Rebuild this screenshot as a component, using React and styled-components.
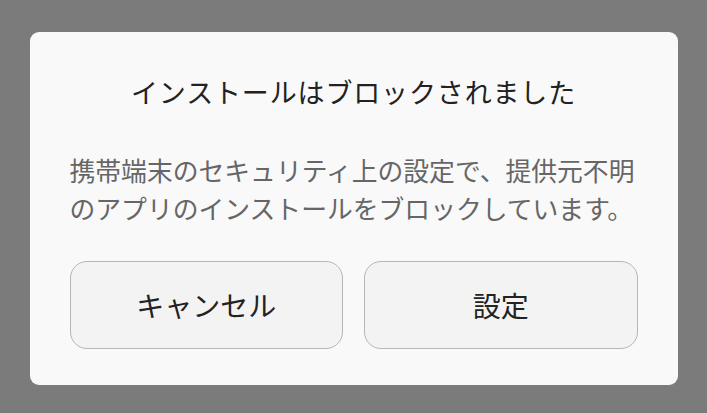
import styled, { createGlobalStyle } from "styled-components"

const GlobalStyle = createGlobalStyle`
    html, body {
        margin: 0;
        padding: 0;
        background: #7b7b7b;
        font-family: "Noto Sans CJK JP", "Noto Sans", sans-serif;
    }
`

const Screen = styled.div`
    width: 707px;
    height: 413px;
    display: flex;
    justify-content: center;
    padding-top: 32px;
    box-sizing: border-box;
`

const Dialog = styled.div`
    width: 648px;
    height: 353px;
    box-sizing: border-box;
    background: #f9f9f9;
    border-radius: 9px;
    padding: 42px 40px 36px;
    display: flex;
    flex-direction: column;
`

const Title = styled.h1`
    margin: 0;
    font-size: 27px;
    line-height: 36px;
    font-weight: 400;
    color: #222;
    text-align: center;
    letter-spacing: 0.85px;
`

const Message = styled.p`
    margin: 41px 0 0;
    font-size: 25.8px;
    line-height: 38px;
    color: #666;
`

const Actions = styled.div`
    margin-top: auto;
    display: grid;
    grid-template-columns: 1fr 1fr;
    gap: 21px;
`

const Button = styled.button`
    height: 88px;
    border: 1px solid #b6b6b6;
    border-radius: 17px;
    background: #f3f3f3;
    color: #222;
    font-family: inherit;
    font-size: 28px;
    padding: 0;
`

const App = () => {
    return (
        <>
            <GlobalStyle />
            <Screen>
                <Dialog>
                    <Title>インストールはブロックされました</Title>
                    <Message>
                        携帯端末のセキュリティ上の設定で、提供元不明<br />
                        のアプリのインストールをブロックしています。
                    </Message>
                    <Actions>
                        <Button>キャンセル</Button>
                        <Button>設定</Button>
                    </Actions>
                </Dialog>
            </Screen>
        </>
    )
}

export default App
